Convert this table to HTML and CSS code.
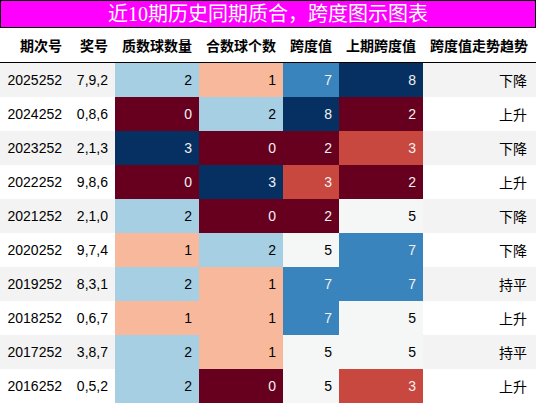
FILE: index.html
```html
<!DOCTYPE html>
<html lang="zh">
<head>
    <meta charset="UTF-8">
    <title>近10期历史同期质合，跨度图示图表</title>
    <link rel="stylesheet" href="styles.css">
</head>
<body>
    <div class="wrap">
        <!-- 标题 -->
        <div class="title">近10期历史同期质合，跨度图示图表</div>

        <!-- 表格 -->
        <table class="chart">
            <colgroup>
                <col class="c_issue">
                <col class="c_num">
                <col class="c_wide">
                <col class="c_wide">
                <col class="c_span">
                <col class="c_wide">
                <col class="c_trend">
            </colgroup>
            <thead>
                <tr>
                    <th>期次号</th>
                    <th>奖号</th>
                    <th>质数球数量</th>
                    <th>合数球个数</th>
                    <th>跨度值</th>
                    <th>上期跨度值</th>
                    <th>跨度值走势趋势</th>
                </tr>
            </thead>
            <tbody>
                <tr>
                    <td>2025252</td><td>7,9,2</td>
                    <td class="lb">2</td><td class="pe">1</td><td class="mb">7</td><td class="db">8</td>
                    <td>下降</td>
                </tr>
                <tr>
                    <td>2024252</td><td>0,8,6</td>
                    <td class="dr">0</td><td class="lb">2</td><td class="db">8</td><td class="dr">2</td>
                    <td>上升</td>
                </tr>
                <tr>
                    <td>2023252</td><td>2,1,3</td>
                    <td class="db">3</td><td class="dr">0</td><td class="dr">2</td><td class="rd">3</td>
                    <td>下降</td>
                </tr>
                <tr>
                    <td>2022252</td><td>9,8,6</td>
                    <td class="dr">0</td><td class="db">3</td><td class="rd">3</td><td class="dr">2</td>
                    <td>上升</td>
                </tr>
                <tr>
                    <td>2021252</td><td>2,1,0</td>
                    <td class="lb">2</td><td class="dr">0</td><td class="dr">2</td><td class="wh">5</td>
                    <td>下降</td>
                </tr>
                <tr>
                    <td>2020252</td><td>9,7,4</td>
                    <td class="pe">1</td><td class="lb">2</td><td class="wh">5</td><td class="mb">7</td>
                    <td>下降</td>
                </tr>
                <tr>
                    <td>2019252</td><td>8,3,1</td>
                    <td class="lb">2</td><td class="pe">1</td><td class="mb">7</td><td class="mb">7</td>
                    <td>持平</td>
                </tr>
                <tr>
                    <td>2018252</td><td>0,6,7</td>
                    <td class="pe">1</td><td class="pe">1</td><td class="mb">7</td><td class="wh">5</td>
                    <td>上升</td>
                </tr>
                <tr>
                    <td>2017252</td><td>3,8,7</td>
                    <td class="lb">2</td><td class="pe">1</td><td class="wh">5</td><td class="wh">5</td>
                    <td>持平</td>
                </tr>
                <tr>
                    <td>2016252</td><td>0,5,2</td>
                    <td class="lb">2</td><td class="dr">0</td><td class="wh">5</td><td class="rd">3</td>
                    <td>上升</td>
                </tr>
            </tbody>
        </table>
    </div>
</body>
</html>
```

FILE: styles.css
```css
body {
    margin: 0;
    background-color: white;
}

.wrap {
    width: 536px;
}

.title {
    height: 26px;
    line-height: 26px;
    border: 1px solid black;
    background-color: #ff00ff;
    color: white;
    text-align: center;
    font-family: "Liberation Serif", "Noto Sans CJK SC", serif;
    font-size: 20px;
}

.chart {
    width: 536px;
    table-layout: fixed;
    border-collapse: collapse;
    font-family: "Liberation Sans", "Noto Sans CJK SC", sans-serif;
    font-size: 14px;
    color: black;
}

.c_issue { width: 69px; }
.c_num { width: 46px; }
.c_wide { width: 84px; }
.c_span { width: 56px; }
.c_trend { width: 113px; }

.chart th {
    height: 34px;
    padding: 0 7px;
    text-align: right;
    font-weight: bold;
    border-bottom: 1px solid black;
    white-space: nowrap;
}

.chart td {
    height: 34px;
    padding: 0 7px;
    text-align: right;
    white-space: nowrap;
}

.chart th:last-child,
.chart td:last-child {
    padding-right: 9px;
}

.chart tbody tr:nth-child(odd) {
    background-color: #f3f3f3;
}

.chart tbody tr:nth-child(even) {
    background-color: white;
}

/* 色阶 */
.lb { background-color: #a7cfe4; color: black; }
.pe { background-color: #f7b89b; color: black; }
.wh { background-color: #f5f6f6; color: black; }
.mb { background-color: #3984bc; color: #f1f1f1; }
.db { background-color: #053061; color: #f1f1f1; }
.dr { background-color: #67001f; color: #f1f1f1; }
.rd { background-color: #c8473f; color: #f1f1f1; }
```
